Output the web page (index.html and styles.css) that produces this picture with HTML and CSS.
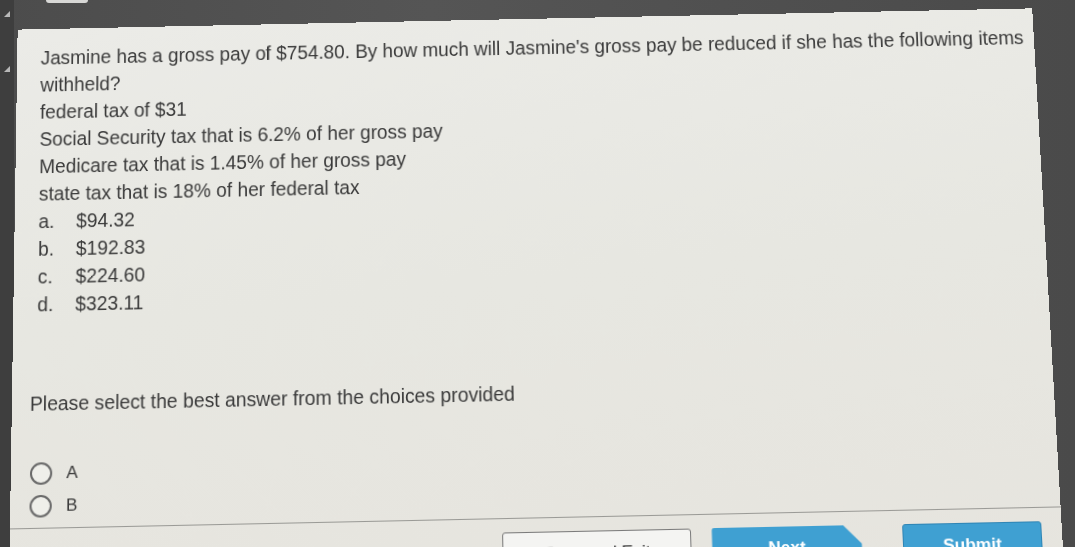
FILE: index.html
```html
<!DOCTYPE html>
<html>
<head>
<meta charset="utf-8">
<link rel="stylesheet" href="styles.css">
</head>
<body>
<div class="screen">
  <div class="sidebar">
    <span class="tri"></span>
    <span class="tri"></span>
  </div>
  <div class="tab"></div>
  <div class="panel">
    <div class="question">
      <p class="line">Jasmine has a gross pay of $754.80. By how much will Jasmine's gross pay be reduced if she has the following items withheld?</p>
      <p class="line">federal tax of $31</p>
      <p class="line">Social Security tax that is 6.2% of her gross pay</p>
      <p class="line">Medicare tax that is 1.45% of her gross pay</p>
      <p class="line">state tax that is 18% of her federal tax</p>
      <ol class="choices">
        <li><span class="letter">a.</span><span>$94.32</span></li>
        <li><span class="letter">b.</span><span>$192.83</span></li>
        <li><span class="letter">c.</span><span>$224.60</span></li>
        <li><span class="letter">d.</span><span>$323.11</span></li>
      </ol>
    </div>
    <p class="prompt">Please select the best answer from the choices provided</p>
    <div class="radios">
      <label class="radio"><span class="circle"></span><span>A</span></label>
      <label class="radio"><span class="circle"></span><span>B</span></label>
    </div>
    <div class="footer">
      <button class="btn btn-save">Save and Exit</button>
      <button class="btn btn-next">Next</button>
      <button class="btn btn-submit">Submit</button>
    </div>
  </div>
</div>
</body>
</html>
```

FILE: styles.css
```css
html, body {
  margin: 0;
  padding: 0;
  width: 1075px;
  height: 547px;
  overflow: hidden;
  background: #4a4a4a;
}

.screen {
  position: relative;
  width: 1075px;
  height: 547px;
  overflow: hidden;
  background: linear-gradient(90deg, #4c4c4c 0%, #555 40%, #4a4a4a 100%);
  font-family: "Liberation Sans", Arial, sans-serif;
}

.sidebar {
  position: absolute;
  left: 0;
  top: 0;
  width: 14px;
  height: 547px;
  background: #3e3e3e;
  display: flex;
  flex-direction: column;
  align-items: center;
  gap: 49px;
  padding-top: 11px;
  box-sizing: border-box;
}

.tri {
  width: 0;
  height: 0;
  border-right: 6px solid #b8b8b8;
  border-top: 6px solid transparent;
}

.tab {
  position: absolute;
  left: 46px;
  top: -4px;
  width: 42px;
  height: 7px;
  border-radius: 3px;
  background: #d8d8d6;
}

.panel {
  position: absolute;
  left: 13px;
  top: 12px;
  width: 1036px;
  height: 600px;
  box-sizing: border-box;
  padding: 17px 8px 0 24px;
  background: linear-gradient(175deg, #ebebe7 0%, #e7e7e1 45%, #e6e4de 100%);
  color: #3a3a3a;
  font-size: 19.3px;
  line-height: 28px;
  transform-origin: 520px 300px;
  transform: perspective(1000px) rotate(-1.2deg) rotateX(4deg);
}

.question p,
.prompt {
  margin: 0;
}

.choices {
  list-style: none;
  margin: 0;
  padding: 0;
}

.choices li {
  display: flex;
}

.letter {
  width: 38px;
}

.prompt {
  margin-top: 71px;
  margin-left: -6px;
}

.radios {
  margin-top: 43px;
  display: flex;
  flex-direction: column;
  gap: 10px;
  margin-left: -5px;
}

.radio {
  display: flex;
  align-items: center;
  gap: 14px;
  height: 22px;
  font-size: 17px;
}

.circle {
  width: 18px;
  height: 18px;
  border: 2px solid #6a6a6a;
  border-radius: 50%;
  background: #efefea;
}

.footer {
  margin: 10px -8px 0 -24px;
  border-top: 1px solid #9a9a96;
  height: 80px;
  padding: 13px 20px 0 485px;
  display: flex;
  gap: 20px;
  box-sizing: border-box;
}

.btn {
  font-family: "Liberation Sans", Arial, sans-serif;
  font-size: 17px;
  height: 40px;
  padding: 11px 0 0 0;
  display: flex;
  justify-content: center;
  align-items: flex-start;
  border-radius: 3px;
  box-sizing: border-box;
}

.btn-save {
  width: 190px;
  background: #f4f4f2;
  border: 1px solid #7a7a7a;
  color: #333;
}

.btn-next {
  width: 150px;
  background: #3fa0d2;
  border: none;
  color: #fff;
  font-weight: bold;
  clip-path: polygon(0 0, 88% 0, 100% 45%, 100% 100%, 0 100%);
}

.btn-submit {
  width: 140px;
  margin-left: 20px;
  background: #3fa0d2;
  border: 1px solid #2f85b5;
  color: #fff;
  font-weight: bold;
}
```
